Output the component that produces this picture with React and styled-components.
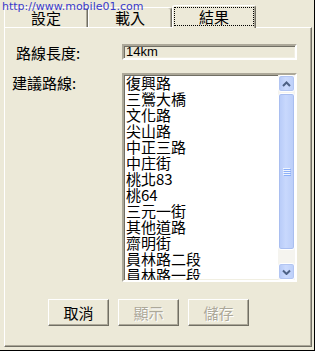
import React from "react";
import styled, { createGlobalStyle } from "styled-components";

const GlobalStyle = createGlobalStyle`
  html, body {
    margin: 0;
    padding: 0;
    background: #ffffff;
  }
  body {
    font-family: "Noto Sans CJK TC", "Liberation Sans", sans-serif;
  }
`;

const Window = styled.div`
  position: relative;
  box-sizing: border-box;
  width: 315px;
  height: 351px;
  padding: 5px 2px 3px 4px;
  background: #ece9d8;
  border-right: 1px solid #000;
  border-bottom: 1px solid #000;
  display: flex;
  flex-direction: column;
  overflow: hidden;
`;

const Watermark = styled.div`
  position: absolute;
  left: 2px;
  top: 0px;
  font-family: "DejaVu Sans", Verdana, sans-serif;
  font-size: 11px;
  line-height: 13px;
  color: #3a3acc;
  z-index: 5;
  pointer-events: none;
`;

const TabRow = styled.div`
  display: flex;
  align-items: flex-end;
  height: 22px;
`;

const Tab = styled.div`
  box-sizing: border-box;
  width: 84px;
  height: ${(p) => (p.$active ? "23px" : "20px")};
  margin-bottom: ${(p) => (p.$active ? "-1px" : "0")};
  position: relative;
  z-index: ${(p) => (p.$active ? 2 : 0)};
  background: #ece9d8;
  border-top: 1px solid #fff;
  border-left: 1px solid #fff;
  border-right: 1px solid #716f64;
  box-shadow: inset -1px 0 #aca899;
  border-radius: 3px 3px 0 0;
  display: flex;
  font-size: 15px;
  color: #000;
`;

const TabLabel = styled.span`
  flex: 1;
  display: flex;
  align-items: center;
  justify-content: center;
  line-height: 16px;
  margin: ${(p) => (p.$active ? "1px 1px 2px 1px" : "0")};
  border: 1px dotted ${(p) => (p.$active ? "#000" : "transparent")};
`;

const Panel = styled.div`
  box-sizing: border-box;
  height: 320px;
  border-top: 1px solid #fff;
  border-left: 1px solid #fff;
  border-right: 1px solid #716f64;
  border-bottom: 1px solid #716f64;
  box-shadow: inset -1px -1px #aca899;
  display: flex;
  flex-direction: column;
`;

const FieldRow = styled.div`
  display: grid;
  grid-template-columns: 117px 175px;
  align-items: ${(p) => (p.$top ? "start" : "center")};
  margin-top: ${(p) => p.$gap}px;
`;

const Label = styled.div`
  font-size: 15px;
  line-height: 16px;
  padding-left: ${(p) => p.$indent}px;
  padding-top: ${(p) => p.$dy || 0}px;
  color: #000;
`;

const sunken = `
  box-sizing: border-box;
  border: 2px solid;
  border-color: #aca899 #fff #fff #aca899;
  box-shadow: inset 1px 1px #716f64, inset -1px -1px #f1efe2;
`;

const ReadOnlyField = styled.div`
  ${sunken}
  height: 16px;
  background: #ece9d8;
  padding-left: 2px;
  font-family: "Liberation Sans", Arial, sans-serif;
  font-size: 13px;
  line-height: 12px;
  display: flex;
  align-items: center;
`;

const ListBox = styled.div`
  ${sunken}
  height: 209px;
  background: #fff;
  display: flex;
  overflow: hidden;
`;

const Items = styled.ul`
  flex: 1;
  margin: 0;
  padding: 0 0 0 2px;
  list-style: none;
  overflow: hidden;
`;

const Item = styled.li`
  font-size: 15px;
  line-height: 16px;
  height: 16px;
  white-space: nowrap;
  color: #000;
`;

const ScrollBar = styled.div`
  width: 17px;
  display: flex;
  flex-direction: column;
  background: #f5f4ef;
`;

const ScrollButton = styled.div`
  box-sizing: border-box;
  height: 17px;
  border: 1px solid #fff;
  border-radius: 3px;
  background: linear-gradient(to right, #b5c9f7, #cbdafd 45%, #bccff9);
  box-shadow: inset 0 0 0 1px #b2c5f2;
  display: flex;
  align-items: center;
  justify-content: center;
`;

const Track = styled.div`
  flex: 1;
  display: flex;
  flex-direction: column;
`;

const Thumb = styled.div`
  box-sizing: border-box;
  margin-top: 1px;
  height: 157px;
  border: 1px solid #fff;
  border-radius: 3px;
  background: linear-gradient(to right, #b6caf8, #c8d8fd 45%, #bacdf9);
  box-shadow: inset 0 0 0 1px #a9bef0;
  display: flex;
  align-items: center;
  justify-content: center;
`;

const ButtonRow = styled.div`
  display: flex;
  gap: 9px;
  margin-top: 17px;
  padding-left: 43px;
`;

const Button = styled.div`
  box-sizing: border-box;
  width: 61px;
  height: 27px;
  background: #ece9d8;
  border-top: 1px solid #fff;
  border-left: 1px solid #fff;
  border-right: 1px solid #716f64;
  border-bottom: 1px solid #716f64;
  box-shadow: inset -1px -1px #aca899;
  display: flex;
  align-items: center;
  justify-content: center;
  font-size: 15px;
  color: ${(p) => (p.$disabled ? "#aca899" : "#000")};
  text-shadow: ${(p) => (p.$disabled ? "1px 1px #fff" : "none")};
`;

const Arrow = ({ down }) => (
  <svg width="9" height="6" viewBox="0 0 9 6">
    <polyline
      points={down ? "1,1.5 4.5,5 8,1.5" : "1,5 4.5,1.5 8,5"}
      fill="none"
      stroke="#4d6185"
      strokeWidth="2"
    />
  </svg>
);

const Grip = () => (
  <svg width="8" height="8" viewBox="0 0 8 8">
    {[0, 2, 4, 6].map((y) => (
      <g key={y}>
        <rect x="0" y={y} width="7" height="1" fill="#eef4fe" />
        <rect x="1" y={y + 1} width="7" height="1" fill="#8cb0f8" />
      </g>
    ))}
  </svg>
);

const routes = [
  "復興路",
  "三鶯大橋",
  "文化路",
  "尖山路",
  "中正三路",
  "中庄街",
  "桃北83",
  "桃64",
  "三元一街",
  "其他道路",
  "齋明街",
  "員林路二段",
  "員林路一段",
];

const tabs = ["設定", "載入", "結果"];

export default function App() {
  const current = 2;
  return (
    <>
      <GlobalStyle />
      <Window>
        <Watermark>http://www.mobile01.com</Watermark>
        <TabRow>
          {tabs.map((t, i) => (
            <Tab key={t} $active={i === current}>
              <TabLabel $active={i === current}>{t}</TabLabel>
            </Tab>
          ))}
        </TabRow>
        <Panel>
          <FieldRow $gap={15}>
            <Label $indent={11} $dy={2}>路線長度:</Label>
            <ReadOnlyField>14km</ReadOnlyField>
          </FieldRow>
          <FieldRow $gap={12} $top>
            <Label $indent={7} $dy={2}>建議路線:</Label>
            <ListBox>
              <Items>
                {routes.map((r) => (
                  <Item key={r}>{r}</Item>
                ))}
              </Items>
              <ScrollBar>
                <ScrollButton>
                  <Arrow />
                </ScrollButton>
                <Track>
                  <Thumb>
                    <Grip />
                  </Thumb>
                </Track>
                <ScrollButton>
                  <Arrow down />
                </ScrollButton>
              </ScrollBar>
            </ListBox>
          </FieldRow>
          <ButtonRow>
            <Button>取消</Button>
            <Button $disabled>顯示</Button>
            <Button $disabled>儲存</Button>
          </ButtonRow>
        </Panel>
      </Window>
    </>
  );
}
